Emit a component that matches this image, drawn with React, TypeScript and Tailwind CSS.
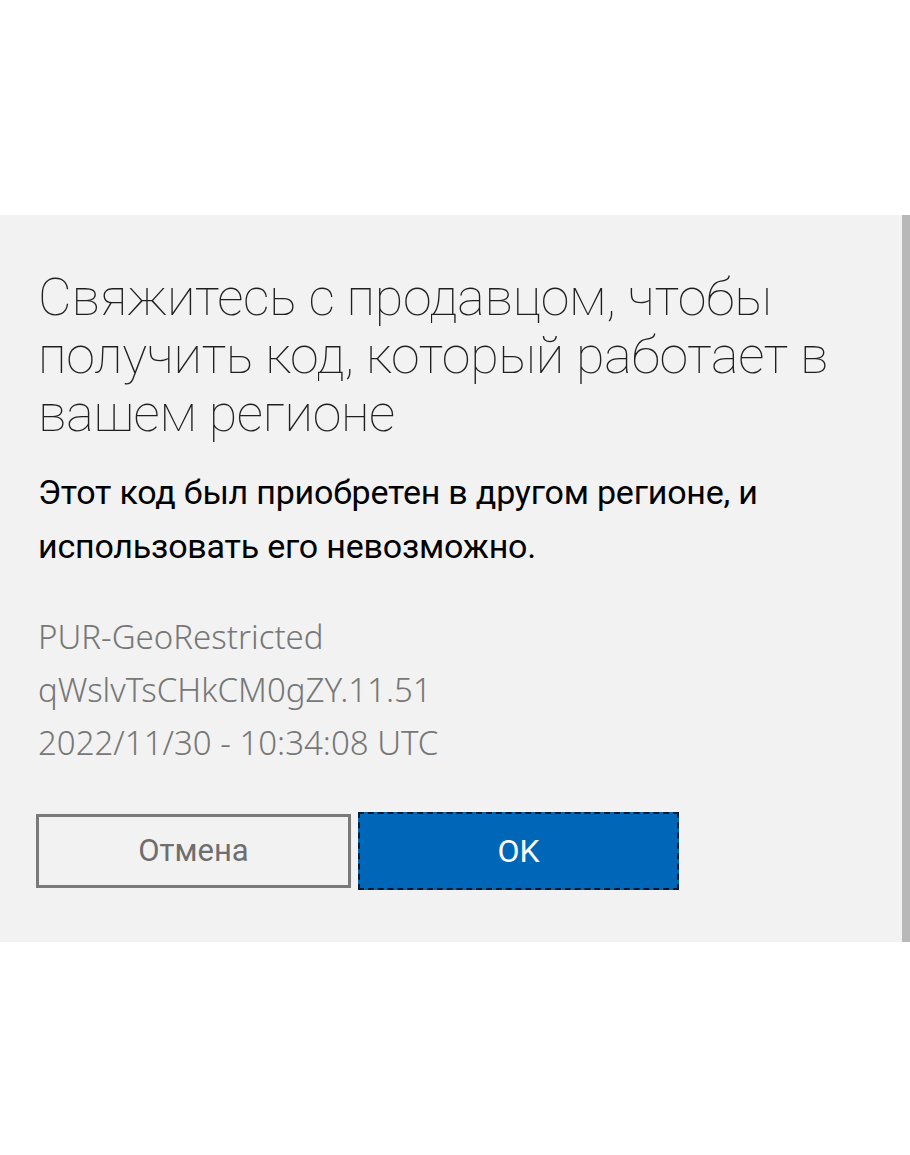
import React from "react";

const App = () => {
    return (
        <div className="min-h-[1155px] w-[910px] bg-white">
            <div className="h-[215px]"></div>

            <div className="w-full bg-[#f2f2f2] border-r-8 border-[#b8b8b8] pl-[38px] pr-[40px] pt-[54px] pb-[52px]">
                <h1 className="font-['Roboto',sans-serif] font-thin text-[52px] leading-[58px] text-[#1f1f1f] tracking-[-0.3px]">
                    Свяжитесь с продавцом, чтобы получить код, который работает в вашем регионе
                </h1>

                <p className="mt-[22px] font-['Roboto',sans-serif] text-[34px] leading-[54px] text-black tracking-[-0.2px]">
                    Этот код был приобретен в другом регионе, и использовать его невозможно.
                </p>

                <div className="mt-[37px] font-['Noto_Sans',sans-serif] font-light text-[33px] leading-[53px] text-[#777777]">
                    <div>PUR-GeoRestricted</div>
                    <div>qWslvTsCHkCM0gZY.11.51</div>
                    <div>2022/11/30 - 10:34:08 UTC</div>
                </div>

                <div className="mt-[43px] flex items-center gap-[7px] -ml-[2px]">
                    <button className="w-[315px] h-[74px] border-[3px] border-[#7a7a7a] bg-transparent font-['Roboto',sans-serif] text-[31px] text-[#6e6e6e]">
                        Отмена
                    </button>
                    <button className="w-[321px] h-[78px] border-2 border-dashed border-[#0b1a2e] bg-[#0067b8] font-['Roboto',sans-serif] text-[32px] text-white">
                        OK
                    </button>
                </div>
            </div>
        </div>
    )
}

export default App
